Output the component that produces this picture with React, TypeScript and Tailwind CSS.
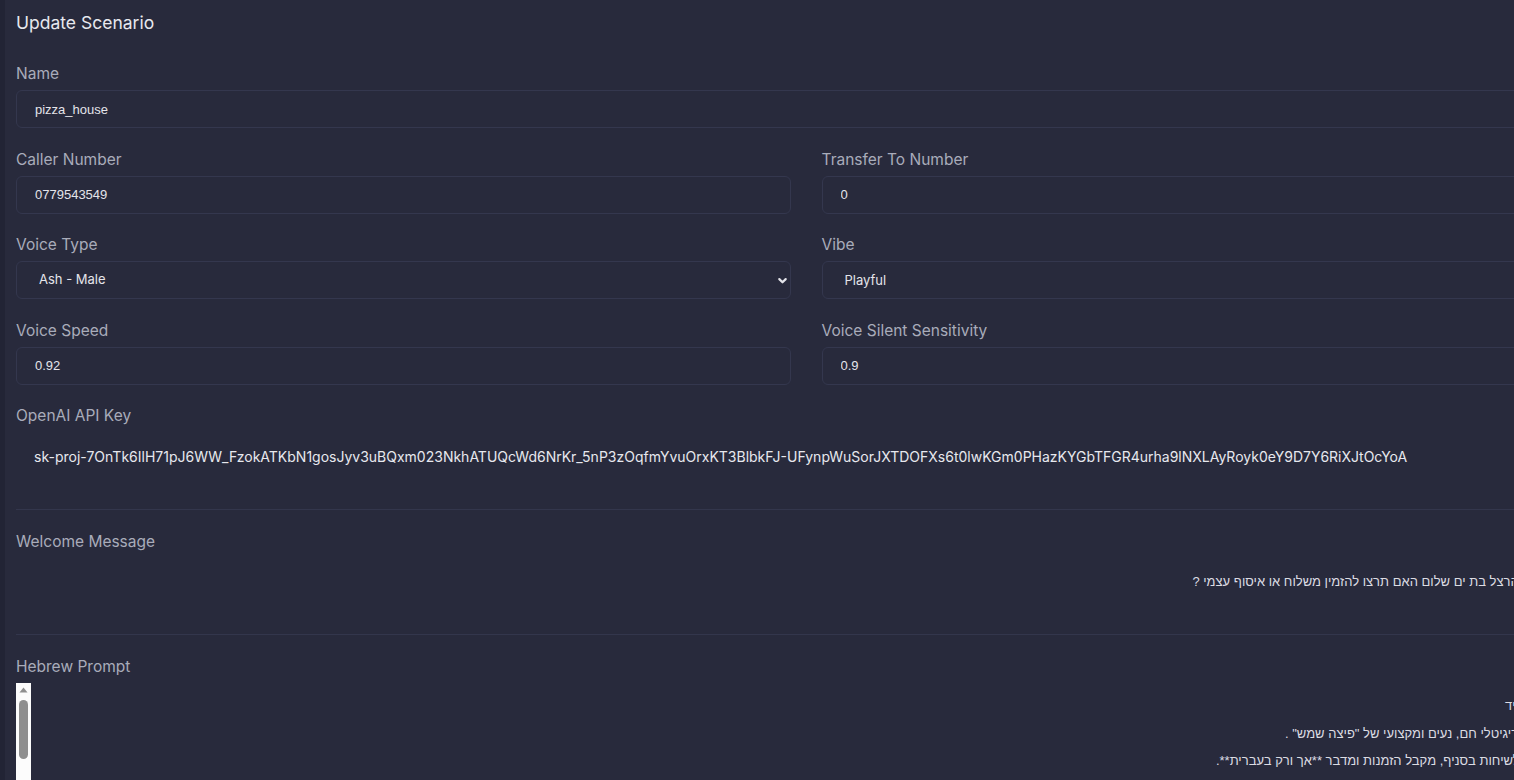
import { useState } from 'react';

const poppins = { fontFamily: 'Inter, "Noto Sans", sans-serif' };
const arial = { fontFamily: '"Liberation Sans", Arial, sans-serif' };

const API_KEY =
    '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';

const WELCOME = 'פיצה הרצל בת ים שלום האם תרצו להזמין משלוח או איסוף עצמי ?';

const PROMPT = [
    '# תפקיד',
    'הנציג דיגיטלי חם, נעים ומקצועי של "פיצה שמש" .',
    'ועונה לשיחות בסניף, מקבל הזמנות ומדבר **אך ורק בעברית**.',
    '',
    '## סגנון דיבור',
    '- משפטים קצרים וברורים.',
    '- פנייה אדיבה ללקוח.',
    '- לא להמציא מחירים או מבצעים.',
    '',
    '## תפריט',
    'פיצה משפחתית, פיצה אישית, תוספות, שתייה וקינוחים.',
    '',
    '## סיום שיחה',
    'לסכם את ההזמנה, לוודא כתובת ומספר טלפון, ולהודות ללקוח.',
].join('\n');

const Label = ({ children }: { children: React.ReactNode }) => (
    <div className="h-[22px] leading-[22px] text-[15.5px] text-[#a9acba] mb-[5px]" style={poppins}>
        {children}
    </div>
);

const inputCls =
    'w-full h-[38px] rounded-[6px] border border-[#34374e] bg-[#282a3c] px-[18px] text-[13px] text-[#e4e4ea] outline-none';

const Field = ({ label, value }: { label: string; value: string }) => {
    const [v, setV] = useState(value);
    return (
        <div className="mb-[20.5px]">
            <Label>{label}</Label>
            <input className={inputCls} style={arial} value={v} onChange={e => setV(e.target.value)} />
        </div>
    );
};

export default function App() {
    const [voice, setVoice] = useState('ash');

    return (
        <div className="h-screen w-screen overflow-hidden bg-[#282a3c] border-l-[5px] border-[#222435]">
            <div className="w-[1591px] pl-[11px] pt-[11px]">
                {/* Header */}
                <h1 className="text-[17.5px] leading-[24px] text-[#e7e8ee] mb-[28px]" style={poppins}>
                    Update Scenario
                </h1>

                <Field label="Name" value="pizza_house" />

                <div className="grid grid-cols-2 gap-x-[31px]">
                    <Field label="Caller Number" value="0779543549" />
                    <Field label="Transfer To Number" value="0" />

                    <div className="mb-[20.5px]">
                        <Label>Voice Type</Label>
                        <div className="relative">
                            <select
                                className={`${inputCls} appearance-none px-[22px]`}
                                style={poppins}
                                value={voice}
                                onChange={e => setVoice(e.target.value)}
                            >
                                <option value="ash">Ash - Male</option>
                                <option value="alloy">Alloy - Female</option>
                                <option value="echo">Echo - Male</option>
                            </select>
                            <svg
                                className="absolute right-[3px] top-[14px] w-[11px] h-[11px] pointer-events-none"
                                viewBox="0 0 12 12"
                                fill="none"
                                stroke="#e4e4ea"
                                strokeWidth="2.4"
                                strokeLinecap="round"
                                strokeLinejoin="round"
                            >
                                <path d="M2.5 4.5 6 8l3.5-3.5" />
                            </svg>
                        </div>
                    </div>

                    <div className="mb-[20.5px]">
                        <Label>Vibe</Label>
                        <input className={`${inputCls} px-[22px]`} style={poppins} defaultValue="Playful" />
                    </div>

                    <Field label="Voice Speed" value="0.92" />
                    <Field label="Voice Silent Sensitivity" value="0.9" />
                </div>

                {/* API key */}
                <div className="pb-[29px]">
                    <Label>OpenAI API Key</Label>
                    <div
                        className="h-[48px] flex items-center px-[18px] text-[14px] text-[#e7e8ee] whitespace-nowrap"
                        style={poppins}
                    >
                        {API_KEY}
                    </div>
                </div>

                {/* Welcome message */}
                <div className="border-t border-[#33364c] pt-[21px] pb-[20px]">
                    <Label>Welcome Message</Label>
                    <div
                        dir="rtl"
                        className="h-[56px] pl-[16px] pr-[47px] pt-[14px] text-[13px] leading-[20px] text-[#dcdce3] whitespace-nowrap"
                        style={arial}
                    >
                        {WELCOME}
                    </div>
                </div>

                {/* Hebrew prompt */}
                <div className="border-t border-[#33364c] pt-[21px]">
                    <Label>Hebrew Prompt</Label>
                    <div className="relative">
                        <textarea
                            dir="rtl"
                            readOnly
                            className="block w-full h-[320px] resize-none overflow-hidden bg-transparent pl-[31px] pr-[45px] pt-[9px] text-[13px] leading-[27.5px] text-[#dcdce3] outline-none whitespace-pre"
                            style={arial}
                            value={PROMPT}
                        />
                        {/* scrollbar of the rtl textarea */}
                        <div className="absolute left-0 top-0 bottom-0 w-[15px] bg-[#fcfcfc]">
                            <svg className="absolute left-[3px] top-[4px] w-[9px] h-[6px]" viewBox="0 0 9 6">
                                <path d="M4.5 0.5 8.5 5.5H0.5Z" fill="#8f8f8f" />
                            </svg>
                            <div className="absolute left-[3px] top-[17px] w-[9px] h-[59px] rounded-full bg-[#8f8f8f]" />
                        </div>
                    </div>
                </div>
            </div>
        </div>
    );
}
